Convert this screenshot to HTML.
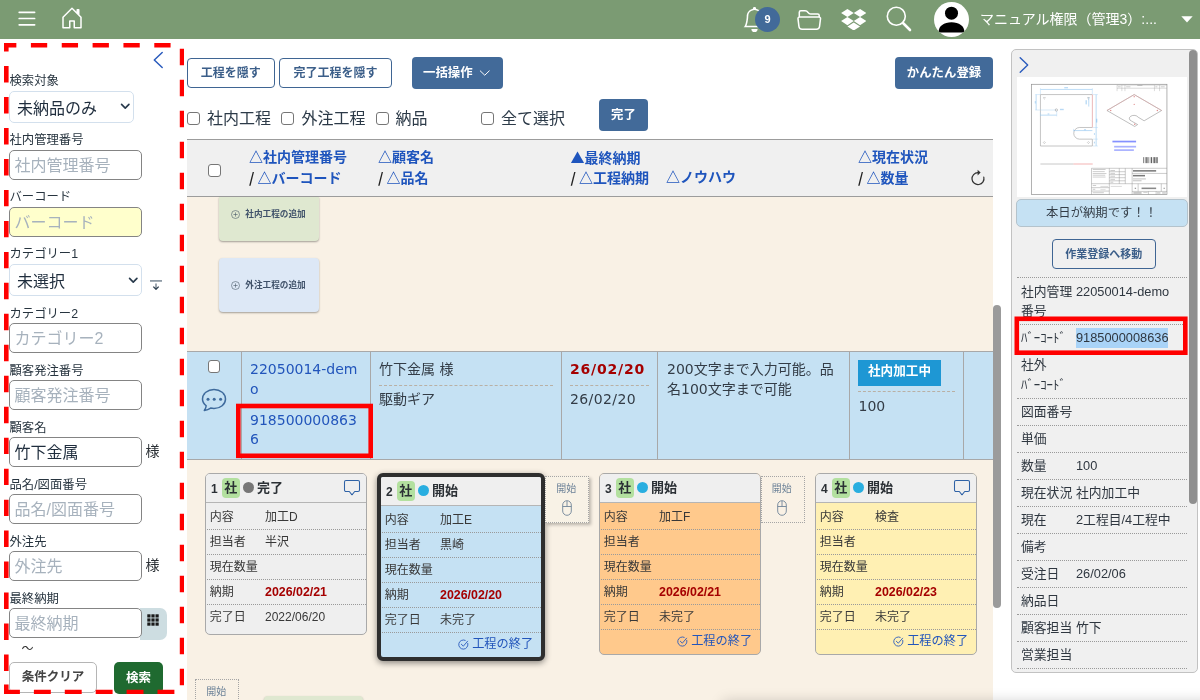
<!DOCTYPE html>
<html lang="ja"><head><meta charset="utf-8"><title>工程管理</title>
<style>
html,body{margin:0;padding:0}
body{will-change:transform;width:1200px;height:700px;overflow:hidden;position:relative;background:#fff;font-family:"Liberation Sans","Noto Sans CJK JP",sans-serif;color:#333}
div,svg,span.a{position:absolute;box-sizing:border-box}
.t{white-space:nowrap}
.v{font-family:"DejaVu Sans","Noto Sans CJK JP",sans-serif}
.inp{border:1px solid #848484;border-radius:5px;background:#fff}
.sel{border:1px solid #d3e0ed;border-radius:5px;background:#fff}
.cb{border:1px solid #767676;border-radius:3px;background:#fff}
.btn-o{border:1px solid #3f6593;border-radius:4px;color:#3b5e89;font-weight:bold;text-align:center}
.btn-p{background:#426a99;border-radius:4px;color:#fff;font-weight:bold;text-align:center}
.card{border:1px solid #a9a9a9;border-radius:5px;overflow:hidden}
.dot{border-top:1px dotted #9a9a9a;height:0}
</style></head><body>

<div style="left:0px;top:0px;width:1200px;height:39px;background:#7b9b73"></div>
<svg style="left:17px;top:10px" width="20" height="18" viewBox="0 0 20 18"><g stroke="#fff" stroke-width="1.7" stroke-linecap="round"><line x1="2.2" y1="2.3" x2="17.6" y2="2.3"/><line x1="2.2" y1="8.5" x2="17.6" y2="8.5"/><line x1="2.2" y1="14.8" x2="17.6" y2="14.8"/></g></svg>
<svg style="left:60px;top:6px" width="24" height="24" viewBox="0 0 16 16" fill="#fff"><path d="M8.354 1.146a.5.5 0 0 0-.708 0l-6 6A.5.5 0 0 0 1.500 7.500v7a.5.5 0 0 0 .5.500h4.500a.5.5 0 0 0 .5-.5v-4h2v4a.5.5 0 0 0 .5.500H14a.5.5 0 0 0 .5-.5v-7a.5.5 0 0 0-.146-.354L13 5.793V2.500a.5.5 0 0 0-.5-.5h-1a.5.5 0 0 0-.5.500v1.293L8.354 1.146zM2.500 14V7.707l5.500-5.500 5.500 5.500V14H10v-4a.5.5 0 0 0-.5-.5h-3a.5.5 0 0 0-.5.500v4H2.500z"/></svg>
<svg style="left:741.500px;top:6.800px" width="25" height="25" viewBox="0 0 16 16" fill="#fff"><path d="M8 16a2 2 0 0 0 2-2H6a2 2 0 0 0 2 2zM8 1.918l-.797.161A4.002 4.002 0 0 0 4 6c0 .628-.134 2.197-.459 3.742-.16.767-.376 1.566-.663 2.258h10.244c-.287-.692-.502-1.490-.663-2.258C12.134 8.197 12 6.628 12 6a4.002 4.002 0 0 0-3.203-3.920L8 1.917zM14.220 12c.223.447.481.801.780 1H1c.299-.199.557-.553.780-1C2.680 10.200 3 6.880 3 6c0-2.420 1.720-4.440 4.005-4.901a1 1 0 1 1 1.990 0A5.002 5.002 0 0 1 13 6c0 .880.320 4.200 1.220 6z"/></svg>
<div style="left:755px;top:6.5px;width:25px;height:25px;background:#426a99;border-radius:50%;color:#fff;font-weight:bold;font-size:11px;line-height:25px;text-align:center">9</div>
<svg style="left:797px;top:6.600px" width="24.500" height="24.500" viewBox="0 0 16 16" fill="#fff"><path d="M1 3.500A1.500 1.500 0 0 1 2.500 2h2.764c.958 0 1.760.560 2.311 1.184C7.985 3.648 8.480 4 9 4h4.500A1.500 1.500 0 0 1 15 5.500v.640c.570.265.940.876.856 1.546l-.640 5.124A2.500 2.500 0 0 1 12.733 15H3.266a2.500 2.500 0 0 1-2.481-2.190l-.640-5.124A1.500 1.500 0 0 1 1 6.140V3.500zM2 6h12v-.5a.5.500 0 0 0-.5-.5H9c-.964 0-1.710-.629-2.174-1.154C6.374 3.334 5.820 3 5.264 3H2.500a.5.500 0 0 0-.5.500V6zm-.367 1a.5.500 0 0 0-.496.562l.640 5.124A1.500 1.500 0 0 0 3.266 14h9.468a1.500 1.500 0 0 0 1.489-1.314l.640-5.124A.5.500 0 0 0 14.367 7H1.633z"/></svg>
<svg style="left:840.700px;top:8.800px" width="25.500" height="21.500" viewBox="0 0 24 20.400" fill="#fff"><path d="M6 0L0 3.820l6 3.830 6-3.830zM18 0l-6 3.820 6 3.830 6-3.830zM0 11.470l6 3.830 6-3.830-6-3.820zM18 7.650l-6 3.820 6 3.830 6-3.830zM6 16.580l6 3.820 6-3.820-6-3.830z"/></svg>
<svg style="left:886px;top:5.600px" width="26" height="26" viewBox="0 0 26 26" fill="none" stroke="#fff"><circle cx="10.300" cy="10.300" r="9" stroke-width="1.600"/><line x1="17" y1="17" x2="24" y2="24" stroke-width="2.600" stroke-linecap="round"/></svg>
<svg style="left:934px;top:2px" width="35" height="35" viewBox="0 0 35 35"><defs><clipPath id="av"><circle cx="17.500" cy="17.500" r="17.500"/></clipPath></defs><circle cx="17.500" cy="17.500" r="17.500" fill="#fff"/><g clip-path="url(#av)" fill="#000"><circle cx="17.500" cy="11.200" r="6.500"/><path d="M4.500 30.500c0-6.500 5.500-10.200 13-10.200s13 3.700 13 10.200z"/></g></svg>
<div class="t" style="left:980px;top:8.600000000000001px;font-size:14px;line-height:20px;color:#fff;">マニュアル権限（管理3）:...</div>
<svg style="left:1181px;top:16px" width="12" height="7" viewBox="0 0 12 7"><path d="M0.300 0.300h11.400L6 6.500z" fill="#fff"/></svg>
<svg style="left:150px;top:49px" width="14" height="22" viewBox="0 0 14 22" fill="none" stroke="#2a5bbd" stroke-width="1.500" stroke-linecap="round" stroke-linejoin="round"><path d="M12.200 3.500L4.300 11l7.900 7.500"/></svg>
<div class="t" style="left:9.5px;top:71.8px;font-size:12.35px;line-height:18px;color:#27343f;">検索対象</div>
<div class="t" style="left:9.5px;top:131.3px;font-size:12.35px;line-height:18px;color:#27343f;">社内管理番号</div>
<div class="t" style="left:9.5px;top:188.2px;font-size:12.35px;line-height:18px;color:#27343f;">バーコード</div>
<div class="t" style="left:9.5px;top:245.3px;font-size:12.35px;line-height:18px;color:#27343f;">カテゴリー1</div>
<div class="t" style="left:9.5px;top:304.7px;font-size:12.35px;line-height:18px;color:#27343f;">カテゴリー2</div>
<div class="t" style="left:9.5px;top:361.6px;font-size:12.35px;line-height:18px;color:#27343f;">顧客発注番号</div>
<div class="t" style="left:9.5px;top:418.6px;font-size:12.35px;line-height:18px;color:#27343f;">顧客名</div>
<div class="t" style="left:9.5px;top:475.6px;font-size:12.35px;line-height:18px;color:#27343f;">品名/図面番号</div>
<div class="t" style="left:9.5px;top:532.6px;font-size:12.35px;line-height:18px;color:#27343f;">外注先</div>
<div class="t" style="left:9.5px;top:589.6px;font-size:12.35px;line-height:18px;color:#27343f;">最終納期</div>
<div class="sel" style="left:9px;top:91px;width:125px;height:31.5px;"></div>
<div class="t" style="left:17px;top:97.0px;font-size:16px;line-height:24px;color:#1f2d3d;">未納品のみ</div>
<svg style="left:120px;top:102.300px" width="10.500" height="8.750" viewBox="0 0 12 10" fill="none" stroke="#283a4c" stroke-width="1.900" stroke-linecap="round" stroke-linejoin="round"><path d="M1.800 2.800L6 7l4.200-4.200"/></svg>
<div class="inp" style="left:9px;top:150px;width:133px;height:30px;background:#fff"></div>
<div class="t" style="left:14.5px;top:154.3px;font-size:16px;line-height:24px;color:#a7b2bd;">社内管理番号</div>
<div class="inp" style="left:9px;top:207px;width:133px;height:30px;background:#ffffcc"></div>
<div class="t" style="left:14.5px;top:211.3px;font-size:16px;line-height:24px;color:#a7b2bd;">バーコード</div>
<div class="sel" style="left:9px;top:264px;width:133px;height:32px;"></div>
<div class="t" style="left:17px;top:270.3px;font-size:16px;line-height:24px;color:#1f2d3d;">未選択</div>
<svg style="left:128px;top:276px" width="10.500" height="8.750" viewBox="0 0 12 10" fill="none" stroke="#283a4c" stroke-width="1.900" stroke-linecap="round" stroke-linejoin="round"><path d="M1.800 2.800L6 7l4.200-4.200"/></svg>
<svg style="left:149px;top:278px" width="14" height="14" viewBox="0 0 14 14" fill="none" stroke-linecap="butt" stroke-linejoin="round"><path d="M1 2.900h12" stroke="#8f9ba6" stroke-width="1.800"/><path d="M7 5.400v5.600" stroke="#7d8994" stroke-width="1.500"/><path d="M4.300 8.600L7 11.300l2.700-2.700" stroke="#2f4050" stroke-width="1.300"/></svg>
<div class="inp" style="left:9px;top:323px;width:133px;height:30px;background:#fff"></div>
<div class="t" style="left:14.5px;top:327.3px;font-size:16px;line-height:24px;color:#a7b2bd;">カテゴリー2</div>
<div class="inp" style="left:9px;top:380px;width:133px;height:30px;background:#fff"></div>
<div class="t" style="left:14.5px;top:384.3px;font-size:16px;line-height:24px;color:#a7b2bd;">顧客発注番号</div>
<div class="inp" style="left:9px;top:437px;width:133px;height:30px;background:#fff"></div>
<div class="t" style="left:14.5px;top:441.3px;font-size:16px;line-height:24px;color:#1f2d3d;">竹下金属</div>
<div class="t" style="left:145.5px;top:440.5px;font-size:14px;line-height:20px;color:#2b3035;">様</div>
<div class="inp" style="left:9px;top:494px;width:133px;height:30px;background:#fff"></div>
<div class="t" style="left:14.5px;top:498.3px;font-size:16px;line-height:24px;color:#a7b2bd;">品名/図面番号</div>
<div class="inp" style="left:9px;top:551px;width:133px;height:30px;background:#fff"></div>
<div class="t" style="left:14.5px;top:555.3px;font-size:16px;line-height:24px;color:#a7b2bd;">外注先</div>
<div class="t" style="left:145.5px;top:554.5px;font-size:14px;line-height:20px;color:#2b3035;">様</div>
<div style="left:140px;top:608px;width:26.5px;height:31.5px;background:#cddde1;border-radius:0 7px 7px 0"></div>
<div class="inp" style="left:9px;top:608px;width:132.5px;height:30px;background:#fff"></div>
<div class="t" style="left:14.5px;top:612.3px;font-size:16px;line-height:24px;color:#a7b2bd;">最終納期</div>
<svg style="left:146.500px;top:613.500px" width="12" height="12" viewBox="0 0 12 12" fill="#1a1a1a"><g><rect x="0.3" y="0.3" width="3.200" height="3.200"/><rect x="4.3999999999999995" y="0.3" width="3.200" height="3.200"/><rect x="8.5" y="0.3" width="3.200" height="3.200"/><rect x="0.3" y="4.3999999999999995" width="3.200" height="3.200"/><rect x="4.3999999999999995" y="4.3999999999999995" width="3.200" height="3.200"/><rect x="8.5" y="4.3999999999999995" width="3.200" height="3.200"/><rect x="0.3" y="8.5" width="3.200" height="3.200"/><rect x="4.3999999999999995" y="8.5" width="3.200" height="3.200"/><rect x="8.5" y="8.5" width="3.200" height="3.200"/></g></svg>
<div class="t" style="left:21.5px;top:640.5px;font-size:12px;line-height:16px;color:#333;">〜</div>
<div style="left:9px;top:662px;width:88px;height:31px;border:1px solid #b5b5b5;border-radius:5px;background:#fff;color:#444;font-weight:bold;font-size:12.500px;line-height:29px;text-align:center">条件クリア</div>
<div style="left:114px;top:662px;width:49px;height:32px;background:#1f6a30;border-radius:5px;color:#fff;font-weight:bold;font-size:12.500px;line-height:32px;text-align:center">検索</div>
<div class="btn-o" style="left:187px;top:58px;width:87.5px;height:30px;font-size:12px;line-height:28px">工程を隠す</div>
<div class="btn-o" style="left:279px;top:58px;width:113px;height:30px;font-size:12px;line-height:28px">完了工程を隠す</div>
<div class="btn-p" style="left:412px;top:57px;width:91px;height:31.5px;font-size:12.400px;line-height:33.500px;text-align:left;padding-left:11px">一括操作</div>
<svg style="left:478.500px;top:69.300px" width="11.500" height="8.200" viewBox="0 0 14 10" fill="none" stroke="#fff" stroke-width="1.200" stroke-linecap="round" stroke-linejoin="round"><path d="M1.500 2.300L7 7.600l5.500-5.300"/></svg>
<div class="btn-p" style="left:895px;top:57px;width:98px;height:31.5px;font-size:12.400px;line-height:33.500px">かんたん登録</div>
<div class="btn-p" style="left:599px;top:98.5px;width:49px;height:32px;font-size:12.400px;line-height:33.500px">完了</div>
<div class="cb" style="left:187px;top:112px;width:13px;height:13px;"></div>
<div class="t" style="left:207px;top:106.8px;font-size:16px;line-height:24px;color:#2c3a48;">社内工程</div>
<div class="cb" style="left:281px;top:112px;width:13px;height:13px;"></div>
<div class="t" style="left:301.5px;top:106.8px;font-size:16px;line-height:24px;color:#2c3a48;">外注工程</div>
<div class="cb" style="left:375.5px;top:112px;width:13px;height:13px;"></div>
<div class="t" style="left:395.5px;top:106.8px;font-size:16px;line-height:24px;color:#2c3a48;">納品</div>
<div class="cb" style="left:481px;top:112px;width:13px;height:13px;"></div>
<div class="t" style="left:501px;top:106.8px;font-size:16px;line-height:24px;color:#2c3a48;">全て選択</div>
<div style="left:187px;top:139px;width:806px;height:58px;background:#f0f0f0;border-top:1px solid #9c9c9c;border-bottom:1px solid #9c9c9c"></div>
<div style="left:187px;top:197px;width:806px;height:503px;background:#f9f1e5"></div>
<div class="cb" style="left:208px;top:164px;width:13px;height:13px;"></div>
<div class="t" style="left:249px;top:147.3px;font-size:14px;line-height:20px;color:#1f55bd;font-weight:bold;">△社内管理番号</div>
<div class="t" style="left:249px;top:167.3px;font-size:14px;line-height:20px;color:#1f55bd;font-weight:bold;"><span style="color:#222;font-family:&quot;Noto Sans CJK JP&quot;,sans-serif;font-weight:bold">/ </span>△バーコード</div>
<div class="t" style="left:378px;top:147.3px;font-size:14px;line-height:20px;color:#1f55bd;font-weight:bold;">△顧客名</div>
<div class="t" style="left:378px;top:167.3px;font-size:14px;line-height:20px;color:#1f55bd;font-weight:bold;"><span style="color:#222;font-family:&quot;Noto Sans CJK JP&quot;,sans-serif;font-weight:bold">/ </span>△品名</div>
<div class="t" style="left:570.5px;top:147.3px;font-size:14px;line-height:20px;color:#1f55bd;font-weight:bold;"><span style="font-family:&quot;Noto Sans CJK JP&quot;,sans-serif">▲</span>最終納期</div>
<div class="t" style="left:570.5px;top:167.3px;font-size:14px;line-height:20px;color:#1f55bd;font-weight:bold;"><span style="color:#222;font-family:&quot;Noto Sans CJK JP&quot;,sans-serif;font-weight:bold">/ </span>△工程納期</div>
<div class="t" style="left:666px;top:167.3px;font-size:14px;line-height:20px;color:#1f55bd;font-weight:bold;">△ノウハウ</div>
<div class="t" style="left:858px;top:147.3px;font-size:14px;line-height:20px;color:#1f55bd;font-weight:bold;">△現在状況</div>
<div class="t" style="left:858px;top:167.3px;font-size:14px;line-height:20px;color:#1f55bd;font-weight:bold;"><span style="color:#222;font-family:&quot;Noto Sans CJK JP&quot;,sans-serif;font-weight:bold">/ </span>△数量</div>
<svg style="left:970px;top:169px" width="16" height="17" viewBox="0 0 16 17" fill="none" stroke="#333" stroke-width="1.200" stroke-linecap="round"><path d="M8 3.600a6 6 0 1 0 5.800 4.500"/><path d="M7.600 0.800l3 2.800-3 2.800" fill="#333" stroke="none"/></svg>
<div style="left:219px;top:197px;width:99.5px;height:44px;background:#dfe8d0;border-radius:0 0 4px 4px;box-shadow:0 1px 2px rgba(0,0,0,.35);"></div>
<svg style="left:230.500px;top:209.5px" width="9" height="9" viewBox="0 0 9 9" fill="none" stroke="#4a5a6a" stroke-width=".6"><circle cx="4.500" cy="4.500" r="4"/><path d="M4.500 2.400v4.200M2.400 4.500h4.200"/></svg>
<div class="t" style="left:245.3px;top:208.0px;font-size:8.65px;line-height:12px;color:#40526a;font-weight:bold;">社内工程の追加</div>
<div style="left:219px;top:258px;width:99.5px;height:54px;background:#dde8f6;border-radius:4px;box-shadow:0 1px 2px rgba(0,0,0,.35);"></div>
<svg style="left:230.500px;top:280.5px" width="9" height="9" viewBox="0 0 9 9" fill="none" stroke="#4a5a6a" stroke-width=".6"><circle cx="4.500" cy="4.500" r="4"/><path d="M4.500 2.400v4.200M2.400 4.500h4.200"/></svg>
<div class="t" style="left:245.3px;top:279.0px;font-size:8.65px;line-height:12px;color:#40526a;font-weight:bold;">外注工程の追加</div>
<div style="left:187px;top:351px;width:806px;height:109px;background:#c5e1f3;border-top:1px solid #a8a8a8;border-bottom:1px solid #a8a8a8"></div>
<div style="left:241px;top:352px;width:1px;height:107px;background:#a8a8a8"></div>
<div style="left:370px;top:352px;width:1px;height:107px;background:#a8a8a8"></div>
<div style="left:561px;top:352px;width:1px;height:107px;background:#a8a8a8"></div>
<div style="left:657px;top:352px;width:1px;height:107px;background:#a8a8a8"></div>
<div style="left:849px;top:352px;width:1px;height:107px;background:#a8a8a8"></div>
<div style="left:963px;top:352px;width:1px;height:107px;background:#a8a8a8"></div>
<div class="cb" style="left:207.5px;top:360px;width:12.5px;height:13px;"></div>
<svg style="left:201px;top:388px" width="26" height="25" viewBox="0 0 26 25" fill="none" stroke="#3e6a9c" stroke-width="1.500" stroke-linejoin="round"><path d="M13 1.500c6.400 0 11.500 4.200 11.500 9.500s-5.100 9.500-11.500 9.500c-1.200 0-2.300-.15-3.400-.42-1.300.9-3.300 1.900-6.300 2.400 1.200-1.700 1.800-3.300 1.900-4.700C2.900 16 1.500 13.600 1.500 11 1.500 5.700 6.600 1.500 13 1.500z"/><g fill="#3e6a9c" stroke="none"><circle cx="7" cy="11.300" r="1.500"/><circle cx="13.200" cy="11.300" r="1.500"/><circle cx="19.600" cy="11.300" r="1.500"/></g></svg>
<div class="t v" style="left:250px;top:359.0px;font-size:14px;line-height:20px;color:#2255bb;">22050014-dem</div>
<div class="t v" style="left:250px;top:378.6px;font-size:14px;line-height:20px;color:#2255bb;">o</div>
<div class="t v" style="left:250px;top:409.5px;font-size:14px;line-height:20px;color:#2255bb;">918500000863</div>
<div class="t v" style="left:250px;top:429.0px;font-size:14px;line-height:20px;color:#2255bb;">6</div>
<svg style="left:234px;top:401px" width="142" height="60" viewBox="234 401 142 60" fill="none"><rect x="238.300" y="406" width="132.400" height="49.800" stroke="#ff0000" stroke-width="4.600"/></svg>
<div class="t v" style="left:379px;top:358.5px;font-size:14px;line-height:20px;color:#333c46;">竹下金属 様</div>
<div style="left:379px;top:385px;width:174px;height:0px;border-top:1px dashed #b9b0a4"></div>
<div class="t v" style="left:379px;top:389.3px;font-size:14px;line-height:20px;color:#333c46;">駆動ギア</div>
<div class="t v" style="left:570px;top:359.0px;font-size:14px;line-height:20px;color:#a50000;font-weight:bold;letter-spacing:.8px;">26/02/20</div>
<div style="left:570px;top:385px;width:79px;height:0px;border-top:1px dashed #b9b0a4"></div>
<div class="t v" style="left:570px;top:389.3px;font-size:14px;line-height:20px;color:#333c46;letter-spacing:.4px;">26/02/20</div>
<div class="t v" style="left:667px;top:358.5px;font-size:14px;line-height:20px;color:#333c46;">200文字まで入力可能。品</div>
<div class="t v" style="left:667px;top:378.5px;font-size:14px;line-height:20px;color:#333c46;">名100文字まで可能</div>
<div style="left:858px;top:360px;width:83px;height:26px;background:#1e97d4;color:#fff;font-weight:bold;font-size:12.600px;line-height:23.500px;text-align:center">社内加工中</div>
<div style="left:858px;top:391px;width:97px;height:0px;border-top:1px dashed #b9b0a4"></div>
<div class="t v" style="left:858.5px;top:395.5px;font-size:14px;line-height:20px;color:#333c46;">100</div>
<div style="left:993px;top:305px;width:8px;height:303px;background:#9b9b9b;border-radius:4px"></div>
<div class="card" style="left:205.0px;top:473px;width:162.0px;height:162.15000000000003px;background:#efefef"></div>
<div style="left:206.0px;top:474px;width:160.0px;height:28.5px;background:#efefef;border-bottom:1px solid #b5b5b5;border-radius:4px 4px 0 0"></div>
<div class="t" style="left:211.0px;top:480.0px;font-size:12px;line-height:18px;color:#2b3035;font-weight:bold;">1</div>
<div style="left:221.5px;top:478px;width:18.5px;height:19.5px;background:#b3e09f;border-radius:4px"></div>
<div class="t" style="left:224.3px;top:479.2px;font-size:13px;line-height:18px;color:#2b3035;font-weight:bold;">社</div>
<div style="left:243.0px;top:481.9px;width:11px;height:11px;background:#777;border-radius:50%"></div>
<div class="t" style="left:257.0px;top:479.2px;font-size:13px;line-height:18px;color:#2b3035;font-weight:bold;">完了</div>
<svg style="left:343.0px;top:479px" width="18" height="18" viewBox="0 0 18 18" fill="none" stroke="#2f62a6" stroke-width="1.050" stroke-linejoin="round"><path transform="translate(.5 .5)" d="M2.500 1h12a1.500 1.500 0 0 1 1.500 1.500v8a1.500 1.500 0 0 1-1.500 1.500h-3.300l-2.700 3.300L5.800 12H2.500A1.500 1.500 0 0 1 1 10.500v-8A1.500 1.500 0 0 1 2.500 1z"/></svg>
<div class="t" style="left:209.8px;top:507.5px;font-size:12px;line-height:18px;color:#383838;">内容</div>
<div class="t" style="left:265.0px;top:507.5px;font-size:12px;line-height:18px;color:#383838;">加工D</div>
<div class="dot" style="left:206.5px;top:528.67px;width:159.5px;height:0px;"></div>
<div class="t" style="left:209.8px;top:532.67px;font-size:12px;line-height:18px;color:#383838;">担当者</div>
<div class="t" style="left:265.0px;top:532.67px;font-size:12px;line-height:18px;color:#383838;">半沢</div>
<div class="dot" style="left:206.5px;top:553.84px;width:159.5px;height:0px;"></div>
<div class="t" style="left:209.8px;top:557.84px;font-size:12px;line-height:18px;color:#383838;">現在数量</div>
<div class="dot" style="left:206.5px;top:579.01px;width:159.5px;height:0px;"></div>
<div class="t" style="left:209.8px;top:583.01px;font-size:12px;line-height:18px;color:#383838;">納期</div>
<div class="t" style="left:265.0px;top:583.31px;font-size:12.4px;line-height:18px;color:#a50000;font-weight:bold;">2026/02/21</div>
<div class="dot" style="left:206.5px;top:604.1800000000001px;width:159.5px;height:0px;"></div>
<div class="t" style="left:209.8px;top:608.1800000000001px;font-size:12px;line-height:18px;color:#383838;">完了日</div>
<div class="t" style="left:265.0px;top:608.1800000000001px;font-size:12px;line-height:18px;color:#383838;">2022/06/20</div>
<div style="left:377.0px;top:472.7px;width:168.0px;height:188.02px;border:4px solid #2e2e2e;border-radius:6px;background:#c5e1f3;box-shadow:0 2px 6px rgba(0,0,0,.45)"></div>
<div style="left:380.5px;top:476.7px;width:160.5px;height:29.5px;background:#efefef;border-bottom:1px solid #b5b5b5;border-radius:2px 2px 0 0"></div>
<div class="t" style="left:386.0px;top:483.09999999999997px;font-size:12px;line-height:18px;color:#2b3035;font-weight:bold;">2</div>
<div style="left:396.5px;top:481.09999999999997px;width:18.5px;height:19.5px;background:#b3e09f;border-radius:4px"></div>
<div class="t" style="left:399.3px;top:482.29999999999995px;font-size:13px;line-height:18px;color:#2b3035;font-weight:bold;">社</div>
<div style="left:418.0px;top:484.99999999999994px;width:11px;height:11px;background:#29aee0;border-radius:50%"></div>
<div class="t" style="left:432.0px;top:482.29999999999995px;font-size:13px;line-height:18px;color:#2b3035;font-weight:bold;">開始</div>
<div class="t" style="left:384.8px;top:510.5999999999999px;font-size:12px;line-height:18px;color:#383838;">内容</div>
<div class="t" style="left:440.0px;top:510.5999999999999px;font-size:12px;line-height:18px;color:#383838;">加工E</div>
<div class="dot" style="left:381.5px;top:531.77px;width:159.5px;height:0px;"></div>
<div class="t" style="left:384.8px;top:535.77px;font-size:12px;line-height:18px;color:#383838;">担当者</div>
<div class="t" style="left:440.0px;top:535.77px;font-size:12px;line-height:18px;color:#383838;">黒崎</div>
<div class="dot" style="left:381.5px;top:556.9399999999999px;width:159.5px;height:0px;"></div>
<div class="t" style="left:384.8px;top:560.9399999999999px;font-size:12px;line-height:18px;color:#383838;">現在数量</div>
<div class="dot" style="left:381.5px;top:582.11px;width:159.5px;height:0px;"></div>
<div class="t" style="left:384.8px;top:586.11px;font-size:12px;line-height:18px;color:#383838;">納期</div>
<div class="t" style="left:440.0px;top:586.41px;font-size:12.4px;line-height:18px;color:#a50000;font-weight:bold;">2026/02/20</div>
<div class="dot" style="left:381.5px;top:607.28px;width:159.5px;height:0px;"></div>
<div class="t" style="left:384.8px;top:611.28px;font-size:12px;line-height:18px;color:#383838;">完了日</div>
<div class="t" style="left:440.0px;top:611.28px;font-size:12px;line-height:18px;color:#383838;">未完了</div>
<div class="dot" style="left:381.5px;top:632.4499999999999px;width:159.5px;height:0px;"></div>
<svg style="left:457.5px;top:638.7499999999999px" width="11" height="11" viewBox="0 0 11 11" fill="none" stroke="#2a5bbd" stroke-width=".9" stroke-linecap="round" stroke-linejoin="round"><path d="M9.800 4.300a4.600 4.600 0 1 1-2.600-3"/><path d="M3.300 5.200l2 2 4.300-5"/></svg>
<div class="t" style="left:472.2px;top:635.4499999999999px;font-size:12.2px;line-height:18px;color:#2255bb;">工程の終了</div>
<div style="left:545px;top:475.5px;width:44px;height:47.5px;border:1px dotted #a5a5a5;box-shadow:2px 2px 3px rgba(0,0,0,.25);background:#f8f2e6;"></div>
<div class="t" style="left:556.3px;top:481.5px;font-size:10px;line-height:14px;color:#6f8499;">開始</div>
<svg style="left:561.5px;top:500.0px" width="10" height="16" viewBox="0 0 10 16" fill="none" stroke="#6f8499" stroke-width=".9"><rect x=".7" y=".7" width="8.600" height="14.600" rx="4.300"/><path d="M5 1v5.500M.7 6.500h8.600"/></svg>
<div class="card" style="left:599.0px;top:473px;width:162.0px;height:182.02px;background:#ffc98c"></div>
<div style="left:600.0px;top:474px;width:160.0px;height:28.5px;background:#efefef;border-bottom:1px solid #b5b5b5;border-radius:4px 4px 0 0"></div>
<div class="t" style="left:605.0px;top:480.0px;font-size:12px;line-height:18px;color:#2b3035;font-weight:bold;">3</div>
<div style="left:615.5px;top:478px;width:18.5px;height:19.5px;background:#b3e09f;border-radius:4px"></div>
<div class="t" style="left:618.3px;top:479.2px;font-size:13px;line-height:18px;color:#2b3035;font-weight:bold;">社</div>
<div style="left:637.0px;top:481.9px;width:11px;height:11px;background:#29aee0;border-radius:50%"></div>
<div class="t" style="left:651.0px;top:479.2px;font-size:13px;line-height:18px;color:#2b3035;font-weight:bold;">開始</div>
<div class="t" style="left:603.8px;top:507.5px;font-size:12px;line-height:18px;color:#383838;">内容</div>
<div class="t" style="left:659.0px;top:507.5px;font-size:12px;line-height:18px;color:#383838;">加工F</div>
<div class="dot" style="left:600.5px;top:528.67px;width:159.5px;height:0px;"></div>
<div class="t" style="left:603.8px;top:532.67px;font-size:12px;line-height:18px;color:#383838;">担当者</div>
<div class="dot" style="left:600.5px;top:553.84px;width:159.5px;height:0px;"></div>
<div class="t" style="left:603.8px;top:557.84px;font-size:12px;line-height:18px;color:#383838;">現在数量</div>
<div class="dot" style="left:600.5px;top:579.01px;width:159.5px;height:0px;"></div>
<div class="t" style="left:603.8px;top:583.01px;font-size:12px;line-height:18px;color:#383838;">納期</div>
<div class="t" style="left:659.0px;top:583.31px;font-size:12.4px;line-height:18px;color:#a50000;font-weight:bold;">2026/02/21</div>
<div class="dot" style="left:600.5px;top:604.1800000000001px;width:159.5px;height:0px;"></div>
<div class="t" style="left:603.8px;top:608.1800000000001px;font-size:12px;line-height:18px;color:#383838;">完了日</div>
<div class="t" style="left:659.0px;top:608.1800000000001px;font-size:12px;line-height:18px;color:#383838;">未完了</div>
<div class="dot" style="left:600.5px;top:629.35px;width:159.5px;height:0px;"></div>
<svg style="left:676.5px;top:635.65px" width="11" height="11" viewBox="0 0 11 11" fill="none" stroke="#2a5bbd" stroke-width=".9" stroke-linecap="round" stroke-linejoin="round"><path d="M9.800 4.300a4.600 4.600 0 1 1-2.600-3"/><path d="M3.300 5.200l2 2 4.300-5"/></svg>
<div class="t" style="left:691.2px;top:632.35px;font-size:12.2px;line-height:18px;color:#2255bb;">工程の終了</div>
<div style="left:760.5px;top:475.5px;width:44px;height:47.5px;border:1px dotted #a5a5a5;"></div>
<div class="t" style="left:771.8px;top:481.5px;font-size:10px;line-height:14px;color:#6f8499;">開始</div>
<svg style="left:777.0px;top:500.0px" width="10" height="16" viewBox="0 0 10 16" fill="none" stroke="#6f8499" stroke-width=".9"><rect x=".7" y=".7" width="8.600" height="14.600" rx="4.300"/><path d="M5 1v5.500M.7 6.500h8.600"/></svg>
<div class="card" style="left:815.0px;top:473px;width:162.0px;height:182.02px;background:#fff0b3"></div>
<div style="left:816.0px;top:474px;width:160.0px;height:28.5px;background:#efefef;border-bottom:1px solid #b5b5b5;border-radius:4px 4px 0 0"></div>
<div class="t" style="left:821.0px;top:480.0px;font-size:12px;line-height:18px;color:#2b3035;font-weight:bold;">4</div>
<div style="left:831.5px;top:478px;width:18.5px;height:19.5px;background:#b3e09f;border-radius:4px"></div>
<div class="t" style="left:834.3px;top:479.2px;font-size:13px;line-height:18px;color:#2b3035;font-weight:bold;">社</div>
<div style="left:853.0px;top:481.9px;width:11px;height:11px;background:#29aee0;border-radius:50%"></div>
<div class="t" style="left:867.0px;top:479.2px;font-size:13px;line-height:18px;color:#2b3035;font-weight:bold;">開始</div>
<svg style="left:953.0px;top:479px" width="18" height="18" viewBox="0 0 18 18" fill="none" stroke="#2f62a6" stroke-width="1.050" stroke-linejoin="round"><path transform="translate(.5 .5)" d="M2.500 1h12a1.500 1.500 0 0 1 1.500 1.500v8a1.500 1.500 0 0 1-1.500 1.500h-3.300l-2.700 3.300L5.800 12H2.500A1.500 1.500 0 0 1 1 10.500v-8A1.500 1.500 0 0 1 2.500 1z"/></svg>
<div class="t" style="left:819.8px;top:507.5px;font-size:12px;line-height:18px;color:#383838;">内容</div>
<div class="t" style="left:875.0px;top:507.5px;font-size:12px;line-height:18px;color:#383838;">検査</div>
<div class="dot" style="left:816.5px;top:528.67px;width:159.5px;height:0px;"></div>
<div class="t" style="left:819.8px;top:532.67px;font-size:12px;line-height:18px;color:#383838;">担当者</div>
<div class="dot" style="left:816.5px;top:553.84px;width:159.5px;height:0px;"></div>
<div class="t" style="left:819.8px;top:557.84px;font-size:12px;line-height:18px;color:#383838;">現在数量</div>
<div class="dot" style="left:816.5px;top:579.01px;width:159.5px;height:0px;"></div>
<div class="t" style="left:819.8px;top:583.01px;font-size:12px;line-height:18px;color:#383838;">納期</div>
<div class="t" style="left:875.0px;top:583.31px;font-size:12.4px;line-height:18px;color:#a50000;font-weight:bold;">2026/02/23</div>
<div class="dot" style="left:816.5px;top:604.1800000000001px;width:159.5px;height:0px;"></div>
<div class="t" style="left:819.8px;top:608.1800000000001px;font-size:12px;line-height:18px;color:#383838;">完了日</div>
<div class="t" style="left:875.0px;top:608.1800000000001px;font-size:12px;line-height:18px;color:#383838;">未完了</div>
<div class="dot" style="left:816.5px;top:629.35px;width:159.5px;height:0px;"></div>
<svg style="left:892.5px;top:635.65px" width="11" height="11" viewBox="0 0 11 11" fill="none" stroke="#2a5bbd" stroke-width=".9" stroke-linecap="round" stroke-linejoin="round"><path d="M9.800 4.300a4.600 4.600 0 1 1-2.600-3"/><path d="M3.300 5.200l2 2 4.300-5"/></svg>
<div class="t" style="left:907.2px;top:632.35px;font-size:12.2px;line-height:18px;color:#2255bb;">工程の終了</div>
<div style="left:194.5px;top:678.5px;width:44.5px;height:30px;border:1px dotted #a5a5a5"></div>
<div class="t" style="left:206.3px;top:685.3px;font-size:10px;line-height:14px;color:#6f8499;">開始</div>
<div style="left:263.5px;top:695.5px;width:99px;height:10px;background:#dfe8d0;border-radius:4px 4px 0 0;box-shadow:0 1px 2px rgba(0,0,0,.35);"></div>
<div style="left:1011px;top:49px;width:186.5px;height:624px;background:#f0f0f0;border:1px solid #c2c2c2;border-radius:5px"></div>
<svg style="left:1017px;top:55px" width="14" height="20" viewBox="0 0 14 20" fill="none" stroke="#2a5bbd" stroke-width="1.400" stroke-linecap="round" stroke-linejoin="round"><path d="M3.200 2.800l7.500 7.200-7.500 7.200"/></svg>
<div style="left:1017px;top:77px;width:170px;height:120px;background:#fff"></div>
<svg style="left:1030px;top:83px" width="139" height="113" viewBox="1030 83 139 113" fill="none"><rect x="1031.34" y="84.29" width="135.6" height="110.23" stroke="#909090" stroke-width=".7" fill="#fff"/><path d="M1092.37 94.57H1040.43V146.0H1092.37V139.14H1079.34A5.83 5.83 0 0 1 1079.34 127.49H1092.37" stroke="#959595" stroke-width=".55"/><path d="M1092.37 94.57L1092.37 127.49" stroke="#e39a9a" stroke-width=".7"/><path d="M1040.43 89.43L1092.37 89.43M1036.14 94.57L1036.14 110.0M1040.43 115.14L1056.71 115.14M1096.14 94.57L1096.14 146.0M1073.51 130.57L1092.37 130.57M1088.77 97.14L1088.77 106.57" stroke="#86bfee" stroke-width=".55"/><path d="M1040.43 88.23L1040.43 94.06M1092.37 88.23L1092.37 94.06M1035.29 94.57L1040.09 94.57M1035.29 110.0L1055.86 110.0M1056.71 110.86L1056.71 116.34M1040.43 112.23L1040.43 116.34M1093.06 94.57L1097.86 94.57M1093.06 127.49L1097.86 127.49M1093.06 139.14L1097.86 139.14M1093.06 146.0L1097.86 146.0M1073.51 128.86L1073.51 131.43" stroke="#a9d3f3" stroke-width=".45"/><rect x="1064.26" y="87.11" width="3.77" height="1.20" fill="#7db9ec" opacity=".55"/><rect x="1034.77" y="101.09" width="1.03" height="2.40" fill="#7db9ec" opacity=".55"/><rect x="1047.63" y="113.43" width="1.71" height="1.03" fill="#7db9ec" opacity=".55"/><rect x="1095.97" y="118.74" width="1.37" height="3.77" fill="#7db9ec" opacity=".55"/><rect x="1085.51" y="100.23" width="1.37" height="4.11" fill="#7db9ec" opacity=".55"/><rect x="1083.97" y="129.2" width="2.06" height="1.03" fill="#7db9ec" opacity=".55"/><rect x="1093.91" y="133.14" width="1.03" height="1.71" fill="#7db9ec" opacity=".55"/><rect x="1093.91" y="141.71" width="1.03" height="1.71" fill="#7db9ec" opacity=".55"/><rect x="1059.97" y="108.8" width="3.77" height="1.37" fill="#7db9ec" opacity=".55"/><circle cx="1056.37" cy="110.0" r="1.15" stroke="#8a8a8a" stroke-width=".5"/><path d="M1043.34 98.0 L1044.37 96.97 L1045.4 98.0 L1044.37 99.03z" stroke="#9a9a9a" stroke-width=".45"/><path d="M1087.4 98.0 L1088.43 96.97 L1089.46 98.0 L1088.43 99.03z" stroke="#9a9a9a" stroke-width=".45"/><path d="M1043.34 142.57 L1044.37 141.54 L1045.4 142.57 L1044.37 143.6z" stroke="#9a9a9a" stroke-width=".45"/><path d="M1087.4 142.57 L1088.43 141.54 L1089.46 142.57 L1088.43 143.6z" stroke="#9a9a9a" stroke-width=".45"/><path d="M1106.94 110.51L1134.2 94.57L1161.63 110.51L1144.14 120.8L1138.14 117.2A4.6 3.1 0 1 0 1131.63 121.14L1137.63 124.57L1134.71 126.46z" stroke="#8a8a8a" stroke-width=".55"/><path d="M1106.94 110.51L1134.2 94.57L1161.63 110.51" stroke="#e3a3a3" stroke-width=".5"/><circle cx="1110.71" cy="110.51" r=".7" fill="#e08a8a"/><circle cx="1134.2" cy="96.63" r=".7" fill="#e08a8a"/><circle cx="1134.2" cy="104.34" r=".7" fill="#e08a8a"/><circle cx="1157.34" cy="110.51" r=".7" fill="#e08a8a"/><circle cx="1134.71" cy="124.23" r=".7" fill="#e08a8a"/><rect x="1112.43" y="140.69" width="23.66" height="1.71" fill="#3448ff" opacity="0.6"/><rect x="1114.14" y="145.83" width="21.94" height="1.71" fill="#3448ff" opacity="0.42"/><rect x="1114.14" y="149.26" width="19.71" height="1.71" fill="#3448ff" opacity="0.42"/><rect x="1143.29" y="157.14" width="0.69" height="6.00" fill="#3a3a3a" opacity=".8"/><rect x="1144.83" y="157.14" width="0.69" height="6.00" fill="#3a3a3a" opacity=".8"/><rect x="1146.2" y="157.14" width="1.37" height="6.00" fill="#3a3a3a" opacity=".8"/><rect x="1148.43" y="157.14" width="0.51" height="6.00" fill="#3a3a3a" opacity=".8"/><rect x="1149.8" y="157.14" width="0.51" height="6.00" fill="#3a3a3a" opacity=".8"/><rect x="1151.0" y="157.14" width="1.03" height="6.00" fill="#3a3a3a" opacity=".8"/><rect x="1152.89" y="157.14" width="0.69" height="6.00" fill="#3a3a3a" opacity=".8"/><rect x="1154.09" y="157.14" width="1.37" height="6.00" fill="#3a3a3a" opacity=".8"/><rect x="1156.32" y="157.14" width="1.37" height="6.00" fill="#3a3a3a" opacity=".8"/><path d="M1040.43 164.0L1073.51 164.0" stroke="#c2c2c2" stroke-width=".9"/><path d="M1073.51 164.0L1092.71 164.0" stroke="#f2aaaa" stroke-width=".9"/><path d="M1091.51 168.29L1166.94 168.29M1091.51 168.29L1091.51 194.51M1091.51 183.71L1166.94 183.71M1132.14 191.43L1166.94 191.43M1109.34 168.29L1109.34 194.51M1119.29 168.29L1119.29 183.71M1125.29 168.29L1125.29 183.71M1132.14 168.29L1132.14 194.51M1138.14 183.71L1138.14 191.43M1161.29 183.71L1161.29 191.43M1132.14 173.43L1166.94 173.43M1109.34 171.71L1125.29 171.71M1109.34 174.63L1125.29 174.63M1109.34 177.71L1125.29 177.71M1109.34 180.8L1125.29 180.8M1091.51 187.66L1109.34 187.66M1091.51 191.09L1109.34 191.09M1148.43 191.43L1148.43 194.51M1156.14 191.43L1156.14 194.51" stroke="#8d8d8d" stroke-width=".45"/><rect x="1133.0" y="170.09" width="23.14" height="1.54" fill="#2d2d2d" opacity="0.63"/><rect x="1133.0" y="174.89" width="12.00" height="1.54" fill="#2d2d2d" opacity="0.63"/><rect x="1141.57" y="187.57" width="14.57" height="1.54" fill="#2d2d2d" opacity="0.56"/><rect x="1133.0" y="178.49" width="12.86" height="0.86" fill="#2d2d2d" opacity="0.35"/><rect x="1133.0" y="180.37" width="8.57" height="0.86" fill="#2d2d2d" opacity="0.35"/><rect x="1092.71" y="169.14" width="12.86" height="0.69" fill="#2d2d2d" opacity="0.35"/><rect x="1092.71" y="171.37" width="12.00" height="0.69" fill="#2d2d2d" opacity="0.32"/><rect x="1092.71" y="173.09" width="13.71" height="0.69" fill="#2d2d2d" opacity="0.32"/><rect x="1092.71" y="174.8" width="12.51" height="0.69" fill="#2d2d2d" opacity="0.32"/><rect x="1092.71" y="176.69" width="12.86" height="0.69" fill="#2d2d2d" opacity="0.32"/><rect x="1110.37" y="170.0" width="4.63" height="0.69" fill="#2d2d2d" opacity="0.35"/><rect x="1110.37" y="172.91" width="4.63" height="0.69" fill="#2d2d2d" opacity="0.35"/><rect x="1110.37" y="175.83" width="4.63" height="0.69" fill="#2d2d2d" opacity="0.35"/><rect x="1110.37" y="178.91" width="4.63" height="0.69" fill="#2d2d2d" opacity="0.35"/><rect x="1110.37" y="181.83" width="2.91" height="0.69" fill="#2d2d2d" opacity="0.35"/><rect x="1092.71" y="185.09" width="3.43" height="0.69" fill="#2d2d2d" opacity="0.35"/><rect x="1100.43" y="185.94" width="7.71" height="0.69" fill="#2d2d2d" opacity="0.24"/><rect x="1110.71" y="185.94" width="11.14" height="0.69" fill="#2d2d2d" opacity="0.24"/><rect x="1092.71" y="188.86" width="2.57" height="0.69" fill="#2d2d2d" opacity="0.35"/><rect x="1100.43" y="189.37" width="5.14" height="0.69" fill="#2d2d2d" opacity="0.21"/><rect x="1092.71" y="192.46" width="11.14" height="0.69" fill="#2d2d2d" opacity="0.35"/><rect x="1133.34" y="192.46" width="8.23" height="1.03" fill="#2d2d2d" opacity="0.49"/><rect x="1143.29" y="192.11" width="4.29" height="0.69" fill="#2d2d2d" opacity="0.28"/><rect x="1157.0" y="192.54" width="3.43" height="0.86" fill="#2d2d2d" opacity="0.42"/><rect x="1162.14" y="192.54" width="3.77" height="0.86" fill="#2d2d2d" opacity="0.42"/><rect x="1134.71" y="187.74" width="1.37" height="1.20" fill="#2d2d2d" opacity="0.49"/><rect x="1163.52" y="187.74" width="1.37" height="1.20" fill="#2d2d2d" opacity="0.42"/><path d="M1117.06 85.14L1166.94 85.14M1117.06 88.23L1166.94 88.23M1117.06 85.14L1117.06 91.14M1121.86 85.14L1121.86 91.14M1124.94 85.14L1124.94 91.14M1154.43 85.14L1154.43 91.14M1159.57 85.14L1159.57 91.14" stroke="#a5a5a5" stroke-width=".4"/><rect x="1117.91" y="86.51" width="2.74" height="0.69" fill="#555" opacity=".4"/><rect x="1126.14" y="86.51" width="4.29" height="0.69" fill="#555" opacity=".4"/><rect x="1137.29" y="85.31" width="5.14" height="0.69" fill="#555" opacity=".4"/><rect x="1155.29" y="86.51" width="2.06" height="0.69" fill="#555" opacity=".4"/><rect x="1160.77" y="86.51" width="3.94" height="0.69" fill="#555" opacity=".4"/></svg>
<div style="left:1016px;top:199px;width:171.5px;height:27.5px;background:#c5e1f3;border:1px solid #b4c3cc;border-radius:5px"></div>
<div class="t" style="left:1046px;top:203.8px;font-size:12.35px;line-height:18px;color:#333c46;">本日が納期です！！</div>
<div class="btn-o" style="left:1052px;top:239px;width:103.5px;height:30px;font-size:11px;line-height:28px">作業登録へ移動</div>
<div class="dot" style="left:1017px;top:277.4px;width:170px;height:0px;"></div>
<div class="t" style="left:1021px;top:281.59999999999997px;font-size:12.800px;line-height:19.500px;color:#2f3740">社内管理<br>番号</div>
<div class="t" style="left:1076px;top:281.59999999999997px;font-size:12.800px;line-height:19.500px;color:#2f3740">22050014-demo</div>
<div class="dot" style="left:1017px;top:323.9px;width:170px;height:0px;"></div>
<div style="left:1076px;top:328px;width:92px;height:20px;background:#a9d3f7"></div>
<div class="t" style="left:1021px;top:328.09999999999997px;font-size:12.800px;line-height:19.500px;color:#2f3740">ﾊﾞｰｺｰﾄﾞ</div>
<div class="t" style="left:1076px;top:328.09999999999997px;font-size:12.800px;line-height:19.500px;color:#2f3740">9185000008636</div>
<div class="dot" style="left:1017px;top:350.9px;width:170px;height:0px;"></div>
<div class="t" style="left:1021px;top:355.09999999999997px;font-size:12.800px;line-height:19.500px;color:#2f3740">社外<br>ﾊﾞｰｺｰﾄﾞ</div>
<div class="dot" style="left:1017px;top:397.9px;width:170px;height:0px;"></div>
<div class="t" style="left:1021px;top:402.09999999999997px;font-size:12.800px;line-height:19.500px;color:#2f3740">図面番号</div>
<div class="dot" style="left:1017px;top:424.9px;width:170px;height:0px;"></div>
<div class="t" style="left:1021px;top:429.09999999999997px;font-size:12.800px;line-height:19.500px;color:#2f3740">単価</div>
<div class="dot" style="left:1017px;top:451.9px;width:170px;height:0px;"></div>
<div class="t" style="left:1021px;top:456.09999999999997px;font-size:12.800px;line-height:19.500px;color:#2f3740">数量</div>
<div class="t" style="left:1076px;top:456.09999999999997px;font-size:12.800px;line-height:19.500px;color:#2f3740">100</div>
<div class="dot" style="left:1017px;top:478.9px;width:170px;height:0px;"></div>
<div class="t" style="left:1021px;top:483.09999999999997px;font-size:12.800px;line-height:19.500px;color:#2f3740">現在状況</div>
<div class="t" style="left:1076px;top:483.09999999999997px;font-size:12.800px;line-height:19.500px;color:#2f3740">社内加工中</div>
<div class="dot" style="left:1017px;top:505.9px;width:170px;height:0px;"></div>
<div class="t" style="left:1021px;top:510.09999999999997px;font-size:12.800px;line-height:19.500px;color:#2f3740">現在</div>
<div class="t" style="left:1076px;top:510.09999999999997px;font-size:12.800px;line-height:19.500px;color:#2f3740">2工程目/4工程中</div>
<div class="dot" style="left:1017px;top:532.9px;width:170px;height:0px;"></div>
<div class="t" style="left:1021px;top:537.1px;font-size:12.800px;line-height:19.500px;color:#2f3740">備考</div>
<div class="dot" style="left:1017px;top:559.9px;width:170px;height:0px;"></div>
<div class="t" style="left:1021px;top:564.1px;font-size:12.800px;line-height:19.500px;color:#2f3740">受注日</div>
<div class="t" style="left:1076px;top:564.1px;font-size:12.800px;line-height:19.500px;color:#2f3740">26/02/06</div>
<div class="dot" style="left:1017px;top:586.9px;width:170px;height:0px;"></div>
<div class="t" style="left:1021px;top:591.1px;font-size:12.800px;line-height:19.500px;color:#2f3740">納品日</div>
<div class="dot" style="left:1017px;top:613.9px;width:170px;height:0px;"></div>
<div class="t" style="left:1021px;top:618.1px;font-size:12.800px;line-height:19.500px;color:#2f3740">顧客担当</div>
<div class="t" style="left:1076px;top:618.1px;font-size:12.800px;line-height:19.500px;color:#2f3740">竹下</div>
<div class="dot" style="left:1017px;top:640.9px;width:170px;height:0px;"></div>
<div class="t" style="left:1021px;top:645.1px;font-size:12.800px;line-height:19.500px;color:#2f3740">営業担当</div>
<div class="dot" style="left:1017px;top:668.2px;width:170px;height:0px;"></div>
<svg style="left:1012px;top:314px" width="178" height="44" viewBox="1012 314 178 44" fill="none"><rect x="1016.800" y="318.800" width="168.500" height="33.900" stroke="#ff0000" stroke-width="4.600"/></svg>
<div style="left:1189px;top:50px;width:8px;height:454px;background:#8f8f8f;border-radius:5px"></div>
<div style="left:726px;top:704px;width:490px;height:20px;background:#fff;box-shadow:0 0 14px 3px rgba(0,0,0,.18)"></div>
<svg style="left:3.900px;top:43px" width="180.400" height="651.300" viewBox="3.900 43 180.400 651.300" fill="none" stroke="#ff0000" stroke-width="4.600"><path d="M-0.050 45.250H175" stroke-dasharray="16.300 14.550"/><path d="M182 48.800V690" stroke-dasharray="16.400 14.600"/><path d="M174.300 692H0" stroke-dasharray="16.900 14"/><path d="M6.200 670.900V30" stroke-dasharray="16.400 14.570"/><path d="M6.200 684.500V694.300"/></svg>
</body></html>
